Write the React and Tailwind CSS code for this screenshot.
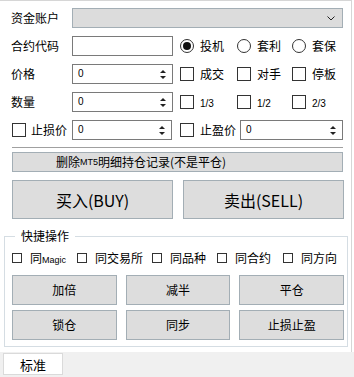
import React from "react";

const CJK = "font-['Noto_Sans_CJK_SC','Noto_Sans',sans-serif]";

function Check({ small }) {
  return (
    <span
      className={
        small
          ? "w-[10px] h-[10px] border border-[#333] bg-white shrink-0"
          : "w-[14px] h-[14px] border border-[#333] bg-white shrink-0"
      }
    />
  );
}

function Radio({ on }) {
  return (
    <span className="w-[14px] h-[14px] rounded-full border border-[#333] bg-white flex items-center justify-center shrink-0">
      {on ? <span className="w-[8px] h-[8px] rounded-full bg-[#111]" /> : null}
    </span>
  );
}

function Spin({ w }) {
  return (
    <div
      className={`${w} h-[20px] border border-[#7a7a7a] bg-white flex items-center justify-between pl-[5px] pr-[6px] shrink-0`}
    >
      <span className="text-[10px] font-['Liberation_Sans',sans-serif] leading-none">0</span>
      <svg width="6" height="11" viewBox="0 0 6 11">
        <path d="M3 1 L6 4 L0 4 Z" fill="#222" />
        <path d="M0 7 L6 7 L3 10 Z" fill="#222" />
      </svg>
    </div>
  );
}

function Opt({ w, children, radio, on }) {
  return (
    <div className={`${w} flex items-center gap-[6px]`}>
      {radio ? <Radio on={on} /> : <Check />}
      <span className="leading-none">{children}</span>
    </div>
  );
}

function Frac({ children }) {
  return <span className="text-[10px] font-['Liberation_Sans',sans-serif]">{children}</span>;
}

function Btn({ children, cls }) {
  return (
    <div
      className={`bg-[#dddddd] border border-[#a3aeb5] flex items-center justify-center ${cls}`}
    >
      {children}
    </div>
  );
}

export default function App() {
  return (
    <div className={`w-[354px] h-[377px] bg-white text-black text-[12px] ${CJK} flex flex-col`}>
      <div className="w-[352px] h-[352px] border-t border-r border-[#d6d6d6] flex flex-col pt-[7px]">
        {/* row 1 */}
        <div className="flex items-center h-[20px] pl-[11px]">
          <span className="w-[61px] leading-none">资金账户</span>
          <div className="w-[271px] h-[20px] bg-[#dcdcdc] border border-[#a3aeb5] flex items-center justify-end pr-[7px]">
            <svg width="8" height="5" viewBox="0 0 8 5">
              <path d="M0.5 0.5 L4 4 L7.5 0.5" stroke="#222" fill="none" strokeWidth="1" />
            </svg>
          </div>
        </div>
        {/* row 2 */}
        <div className="flex items-center h-[20px] pl-[11px] mt-[8px]">
          <span className="w-[61px] leading-none">合约代码</span>
          <div className="w-[101px] h-[20px] border border-[#7a7a7a] bg-white" />
          <div className="flex items-center ml-[7px]">
            <Opt w="w-[57px]" radio on>投机</Opt>
            <Opt w="w-[55px]" radio>套利</Opt>
            <Opt w="w-[50px]" radio>套保</Opt>
          </div>
        </div>
        {/* row 3 */}
        <div className="flex items-center h-[20px] pl-[11px] mt-[8px]">
          <span className="w-[61px] leading-none">价格</span>
          <Spin w="w-[101px]" />
          <div className="flex items-center ml-[7px]">
            <Opt w="w-[57px]">成交</Opt>
            <Opt w="w-[55px]">对手</Opt>
            <Opt w="w-[50px]">停板</Opt>
          </div>
        </div>
        {/* row 4 */}
        <div className="flex items-center h-[20px] pl-[11px] mt-[8px]">
          <span className="w-[61px] leading-none">数量</span>
          <Spin w="w-[101px]" />
          <div className="flex items-center ml-[7px]">
            <Opt w="w-[57px]"><Frac>1/3</Frac></Opt>
            <Opt w="w-[55px]"><Frac>1/2</Frac></Opt>
            <Opt w="w-[50px]"><Frac>2/3</Frac></Opt>
          </div>
        </div>
        {/* row 5 */}
        <div className="flex items-center h-[20px] pl-[12px] mt-[8px]">
          <div className="w-[60px] shrink-0 flex items-center gap-[5px]">
            <Check />
            <span className="leading-none">止损价</span>
          </div>
          <Spin w="w-[100px]" />
          <div className="w-[60px] shrink-0 flex items-center gap-[6px] ml-[8px]">
            <Check />
            <span className="leading-none">止盈价</span>
          </div>
          <Spin w="w-[103px]" />
        </div>
        {/* separator */}
        <div className="ml-[12px] w-[331px] h-px bg-[#a0a0a0] mt-[7px]" />
        {/* delete btn */}
        <div className="ml-[12px] w-[331px] h-[20px] mt-[4px] bg-[#dddddd] border border-[#a3aeb5] flex items-center pl-[43px] leading-none">
          <span>删除</span>
          <span className="text-[9px] font-['Liberation_Sans',sans-serif]">MT5</span>
          <span>明细持仓记录(不是平仓)</span>
        </div>
        {/* big buttons */}
        <div className="flex gap-[10px] pl-[12px] mt-[8px]">
          <Btn cls="w-[161px] h-[39px] text-[16px]">买入(BUY)</Btn>
          <Btn cls="w-[161px] h-[39px] text-[16px]">卖出(SELL)</Btn>
        </div>
        {/* group */}
        <div className="relative ml-[4px] w-[344px] h-[111px] mt-[17px] border border-[#d5dde3] flex flex-col pl-[7px] pr-[2px]">
          <span className="absolute left-[10px] -top-[8px] bg-white px-[6px] leading-[14px]">快捷操作</span>
          <div className="flex items-center h-[12px] mt-[15px]">
            <div className="w-[65px] flex items-center gap-[8px]">
              <Check small />
              <span className="leading-none">
                同<span className="text-[9px] font-['Liberation_Sans',sans-serif]">Magic</span>
              </span>
            </div>
            <div className="w-[75px] flex items-center gap-[8px]">
              <Check small />
              <span className="leading-none">同交易所</span>
            </div>
            <div className="w-[65px] flex items-center gap-[8px]">
              <Check small />
              <span className="leading-none">同品种</span>
            </div>
            <div className="w-[66px] flex items-center gap-[8px]">
              <Check small />
              <span className="leading-none">同合约</span>
            </div>
            <div className="flex items-center gap-[8px]">
              <Check small />
              <span className="leading-none">同方向</span>
            </div>
          </div>
          <div className="grid grid-cols-3 gap-x-[9px] gap-y-[5px] mt-[11px] w-[332px]">
            <Btn cls="h-[30px]">加倍</Btn>
            <Btn cls="h-[30px]">减半</Btn>
            <Btn cls="h-[30px]">平仓</Btn>
            <Btn cls="h-[30px]">锁仓</Btn>
            <Btn cls="h-[30px]">同步</Btn>
            <Btn cls="h-[30px]">止损止盈</Btn>
          </div>
        </div>
      </div>
      <div className="flex-1 bg-[#f0f0f0] pl-[3px] pt-[1px]">
        <div className="w-[60px] h-[22px] bg-white border border-[#dadada] flex items-center justify-center text-[13px] leading-none">
          标准
        </div>
      </div>
    </div>
  );
}
